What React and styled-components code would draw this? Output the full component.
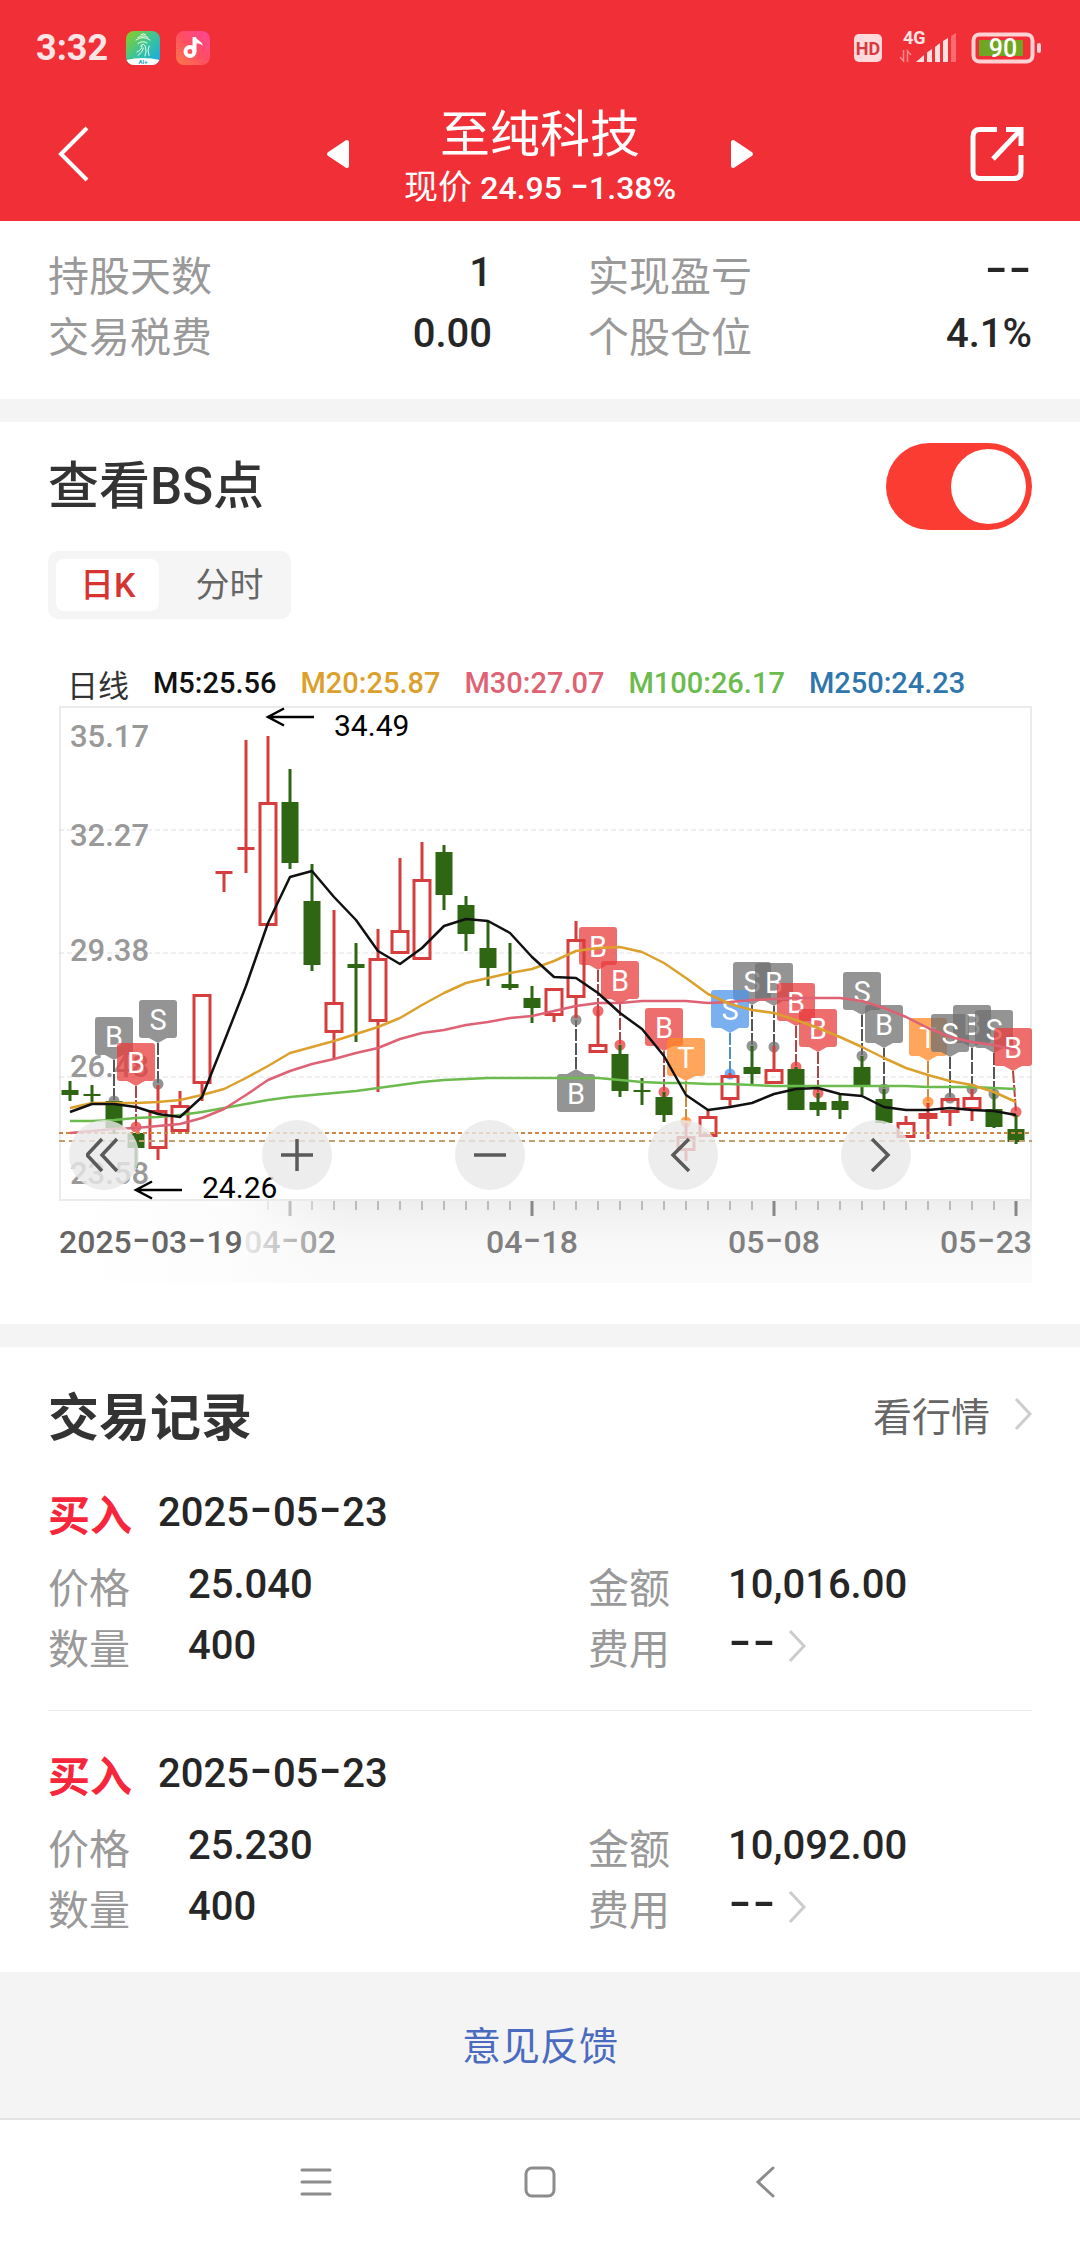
import React, { useState } from 'react';
import styled, { createGlobalStyle } from 'styled-components';

const RED = '#d63d3d';
const GREEN = '#2f6614';
const STEP = 22;
const FIRST = 11;

// up, high, body top, body bottom, low
const CANDLES = [
  [0, 1081, 1090, 1095, 1101],
  [0, 1085, 1094, 1096, 1103],
  [0, 1101, 1101, 1128, 1134],
  [0, 1133, 1133, 1148, 1168],
  [1, 1085, 1110, 1149, 1160],
  [1, 1091, 1105, 1132, 1132],
  [1, 994, 994, 1084, 1101],
  [1, 872, 871, 874, 892],
  [1, 740, 847, 850, 873],
  [1, 736, 802, 926, 926],
  [0, 769, 802, 863, 869],
  [0, 864, 901, 965, 971],
  [1, 910, 1002, 1033, 1059],
  [0, 943, 964, 968, 1042],
  [1, 929, 958, 1022, 1092],
  [1, 858, 930, 954, 954],
  [1, 842, 879, 960, 960],
  [0, 845, 852, 895, 910],
  [0, 896, 905, 934, 951],
  [0, 922, 948, 968, 986],
  [0, 943, 984, 988, 990],
  [0, 986, 998, 1008, 1023],
  [1, 988, 988, 1016, 1022],
  [1, 921, 939, 998, 1018],
  [1, 1010, 1044, 1053, 1053],
  [0, 1045, 1054, 1091, 1097],
  [0, 1078, 1090, 1092, 1105],
  [0, 1092, 1097, 1115, 1122],
  [1, 1123, 1136, 1151, 1161],
  [1, 1110, 1116, 1137, 1137],
  [1, 1073, 1075, 1100, 1106],
  [0, 1046, 1067, 1074, 1084],
  [1, 1046, 1069, 1084, 1084],
  [0, 1067, 1069, 1110, 1110],
  [0, 1093, 1102, 1110, 1116],
  [0, 1095, 1101, 1110, 1119],
  [0, 1056, 1067, 1085, 1095],
  [0, 1089, 1099, 1123, 1124],
  [1, 1116, 1122, 1138, 1138],
  [1, 1103, 1113, 1119, 1139],
  [1, 1098, 1098, 1113, 1126],
  [1, 1089, 1097, 1110, 1121],
  [0, 1093, 1109, 1127, 1128],
  [0, 1115, 1129, 1142, 1144],
];

const AVERAGES = [
  {
    color: '#6cbb4e',
    values: [1121, 1121, 1120, 1118, 1117, 1115, 1112, 1108, 1104, 1100, 1097, 1095, 1093, 1091, 1088, 1085, 1082, 1080, 1079, 1078, 1078, 1078, 1078, 1078, 1078, 1080, 1082, 1083, 1083, 1084, 1084, 1085, 1086, 1086, 1086, 1086, 1086, 1086, 1086, 1087, 1087, 1087, 1088, 1089],
  },
  {
    color: '#df6274',
    values: [1133, 1131, 1129, 1128, 1126, 1124, 1118, 1109, 1095, 1080, 1071, 1064, 1059, 1053, 1048, 1039, 1033, 1030, 1025, 1022, 1018, 1016, 1011, 1006, 1003, 1003, 1001, 1001, 1001, 1003, 1002, 1000, 999, 998, 998, 998, 1001, 1008, 1017, 1028, 1037, 1042, 1045, 1050],
  },
  {
    color: '#dca02c',
    values: [1108, 1103, 1103, 1103, 1102, 1100, 1095, 1089, 1078, 1066, 1053, 1047, 1041, 1034, 1027, 1018, 1005, 993, 983, 978, 973, 969, 961, 951, 948, 947, 952, 963, 978, 994, 1004, 1010, 1013, 1020, 1028, 1037, 1047, 1058, 1068, 1075, 1081, 1085, 1092, 1102],
  },
  {
    color: '#111',
    values: [1112, 1104, 1104, 1107, 1114, 1117, 1097, 1042, 986, 923, 877, 871, 897, 920, 951, 964, 948, 926, 919, 921, 933, 957, 977, 978, 993, 1013, 1029, 1056, 1095, 1110, 1107, 1103, 1094, 1089, 1088, 1094, 1096, 1107, 1110, 1110, 1108, 1110, 1111, 1115],
  },
];

const MARKER_COLORS = {
  gray: ['#707070', '#555'],
  red: ['#e83c3c', '#b04545'],
  orange: ['#ff8826', '#d18a3c'],
  blue: ['#4e96eb', '#4e8fc4'],
};

const MARKERS = [
  { i: 2, text: 'B', tone: 'gray', dot: 1101 },
  { i: 3, text: 'B', tone: 'red', dot: 1127 },
  { i: 4, text: 'S', tone: 'gray', dot: 1084 },
  { i: 23, text: 'B', tone: 'gray', dot: 1020, below: true },
  { i: 24, text: 'B', tone: 'red', dot: 1011 },
  { i: 25, text: 'B', tone: 'red', dot: 1045 },
  { i: 27, text: 'B', tone: 'red', dot: 1092 },
  { i: 28, text: 'T', tone: 'orange', dot: 1122 },
  { i: 31, text: 'S', tone: 'gray', dot: 1046 },
  { i: 30, text: 'S', tone: 'blue', dot: 1074 },
  { i: 32, text: 'B', tone: 'gray', dot: 1047 },
  { i: 33, text: 'B', tone: 'red', dot: 1067 },
  { i: 34, text: 'B', tone: 'red', dot: 1093 },
  { i: 36, text: 'S', tone: 'gray', dot: 1056 },
  { i: 37, text: 'B', tone: 'gray', dot: 1089 },
  { i: 39, text: 'T', tone: 'orange', dot: 1102 },
  { i: 41, text: 'B', tone: 'gray', dot: 1089 },
  { i: 40, text: 'S', tone: 'gray', dot: 1098 },
  { i: 42, text: 'S', tone: 'gray', dot: 1094 },
  { i: 43, text: 'B', tone: 'red', dot: 1112 },
];

const LEGEND = [
  { text: 'M5:25.56', color: '#111' },
  { text: 'M20:25.87', color: '#dca02c' },
  { text: 'M30:27.07', color: '#df6274' },
  { text: 'M100:26.17', color: '#6cbb4e' },
  { text: 'M250:24.23', color: '#2f76ad' },
];

const PRICES = [
  ['35.17', 747],
  ['32.27', 846],
  ['29.38', 961],
  ['26.48', 1077],
  ['23.58', 1184],
];

const STATS = [
  ['持股天数', '1'],
  ['实现盈亏', '--'],
  ['交易税费', '0.00'],
  ['个股仓位', '4.1%'],
];

const RECORDS = [
  { id: 1, side: '买入', date: '2025-05-23', price: '25.040', amount: '10,016.00', count: '400', fee: '--' },
  { id: 2, side: '买入', date: '2025-05-23', price: '25.230', amount: '10,092.00', count: '400', fee: '--' },
];

const xAt = i => FIRST + i * STEP;

function Dashed({ text, as: Part }) {
  return text.split(/(-)/).map((part, i) => (part === '-' ? <Part key={i}>-</Part> : part));
}

function Figures({ children }) {
  return <Dashed text={children} as={Dash} />;
}

function Candle({ x, data }) {
  const [up, high, top, bottom, low] = data;
  const color = up ? RED : GREEN;
  const flat = bottom - top < 5;
  return (
    <g>
      {high < top && <rect x={x - 1.5} y={high} width="3" height={top - high} fill={color} />}
      {low > bottom && <rect x={x - 1.5} y={bottom} width="3" height={low - bottom} fill={color} />}
      {up && !flat ? (
        <rect x={x - 8} y={top + 1.5} width="16" height={bottom - top - 3} fill="none" stroke={color} strokeWidth="3" />
      ) : (
        <rect x={x - 8.5} y={top} width="17" height={bottom - top} fill={color} />
      )}
    </g>
  );
}

function Marker({ i, text, tone, dot, below }) {
  const x = xAt(i);
  const boxX = Math.min(x, 954);
  const [fill, line] = MARKER_COLORS[tone];
  const top = below ? dot + 54 : dot - 84;
  const tip = below ? `M${boxX - 9} ${top}l9 -5l9 5z` : `M${boxX - 9} ${top + 38}l9 5l9 -5z`;
  return (
    <g>
      <line x1={boxX} y1={below ? top - 5 : top + 43} x2={x} y2={dot} stroke={line} strokeWidth="2" strokeDasharray="12 2" />
      <circle cx={x} cy={dot} r="5.5" fill={fill} fillOpacity="0.75" />
      <g fill={fill} fillOpacity="0.75">
        <rect x={boxX - 19} y={top} width="38" height="38" rx="3" />
        <path d={tip} />
      </g>
      <MarkerText x={boxX} y={top + 30}>{text}</MarkerText>
    </g>
  );
}

function KLineChart() {
  return (
    <ChartSvg viewBox="0 704 973 580" role="img" aria-label="日K">
      <defs>
        <linearGradient id="axis" x1="0" y1="0" x2="0" y2="1">
          <stop offset="0" stopColor="#eeeeee" />
          <stop offset="0.5" stopColor="#f8f8f8" />
          <stop offset="1" stopColor="#fafafa" />
        </linearGradient>
        <linearGradient id="fade" x1="0" y1="0" x2="1" y2="0">
          <stop offset="0" stopColor="#fff" />
          <stop offset="0.6" stopColor="#fdfdfd" stopOpacity="0.95" />
          <stop offset="1" stopColor="#fafafa" stopOpacity="0" />
        </linearGradient>
      </defs>

      <rect x="1" y="707" width="971" height="493" fill="none" stroke="#ebebeb" strokeWidth="2" />
      {[830, 953, 1077].map(y => (
        <line key={y} x1="0" y1={y} x2="973" y2={y} stroke="#e0e0e0" strokeDasharray="5 3" />
      ))}
      {PRICES.map(([text, y]) => (
        <PriceText key={text} x="11" y={y}>{text}</PriceText>
      ))}

      {MARKERS.map(marker => <Marker key={marker.i} {...marker} />)}
      {CANDLES.map((data, i) => <Candle key={i} x={xAt(i)} data={data} />)}
      <line x1="0" y1="1133" x2="973" y2="1133" stroke="#cf8446" strokeWidth="2" strokeDasharray="4 3" />
      <line x1="0" y1="1141" x2="973" y2="1141" stroke="#c0a070" strokeWidth="2" strokeDasharray="6 4" />
      {AVERAGES.map(({ color, values }) => (
        <polyline
          key={color}
          points={values.map((y, i) => `${xAt(i)},${y}`).join(' ')}
          fill="none"
          stroke={color}
          strokeWidth="2.5"
          strokeLinejoin="round"
        />
      ))}

      <path d="M255 717H209M225 708.500L209 717L225 725.500" fill="none" stroke="#000" strokeWidth="2.500" />
      <NoteText x="275" y="736">34.49</NoteText>
      <path d="M123 1190H77M93 1181.500L77 1190L93 1198.500" fill="none" stroke="#000" strokeWidth="2.500" />
      <NoteText x="143" y="1198">24.26</NoteText>

      <rect x="0" y="1201" width="973" height="82" fill="url(#axis)" />
      {CANDLES.map((_, i) => {
        const major = i % 11 === 10;
        return (
          <rect
            key={i}
            x={xAt(i) - (major ? 1.5 : 0.5)}
            y="1201"
            width={major ? 3 : 1}
            height={major ? 15 : 9}
            fill="#888"
            fillOpacity={i < 9 ? 0 : 1}
          />
        );
      })}
      <AxisText x="231" y="1253" textAnchor="middle"><Dashed text="04-02" as={SvgDash} /></AxisText>
      <rect x="0" y="1201" width="290" height="82" fill="url(#fade)" />
      <AxisText x="0" y="1253" $strong><Dashed text="2025-03-19" as={SvgDash} /></AxisText>
      <AxisText x="473" y="1253" textAnchor="middle"><Dashed text="04-18" as={SvgDash} /></AxisText>
      <AxisText x="715" y="1253" textAnchor="middle"><Dashed text="05-08" as={SvgDash} /></AxisText>
      <AxisText x="973" y="1253" textAnchor="end"><Dashed text="05-23" as={SvgDash} /></AxisText>
    </ChartSvg>
  );
}

function StatusIcons() {
  return (
    <svg width="188" height="40" viewBox="0 0 188 40" aria-hidden="true">
      <rect x="0" y="6" width="28" height="28" rx="5" fill="#ffd9db" />
      <HdText x="14" y="27" textAnchor="middle">HD</HdText>
      <SignalText x="49" y="16">4G</SignalText>
      <g stroke="#ff8a8e" strokeWidth="1.5" fill="none">
        <path d="M49.500 22V33L46 29" />
        <path d="M53.500 34V23L57 27" />
      </g>
      <g fill="#ffe0e1">
        <path d="M62 34L70 27V34z" />
        <path d="M73 34V24.500L78 21V34z" />
        <path d="M81 34V19L86 15V34z" />
        <path d="M89 34V13L94 10V34z" />
      </g>
      <path d="M97 34V8L102 5V34z" fill="#ff6a70" />
      <rect x="119.500" y="6.500" width="59" height="27" rx="6" fill="none" stroke="#ffd2d4" strokeWidth="4" />
      <rect x="125" y="12" width="44" height="16" rx="1" fill="#6fa722" />
      <rect x="183" y="15" width="4" height="10" rx="2" fill="#ffd2d4" />
      <BatteryText x="149" y="29" textAnchor="middle">90</BatteryText>
    </svg>
  );
}

function AppIcons() {
  return (
    <svg width="84" height="34" viewBox="0 0 84 34" aria-hidden="true">
      <defs>
        <linearGradient id="home" x1="0" y1="0" x2="1" y2="1">
          <stop offset="0" stopColor="#8fce1f" />
          <stop offset="0.5" stopColor="#3cc39a" />
          <stop offset="1" stopColor="#0fa9f2" />
        </linearGradient>
        <linearGradient id="music" x1="1" y1="0" x2="0" y2="1">
          <stop offset="0" stopColor="#ff4597" />
          <stop offset="0.5" stopColor="#ff4e62" />
          <stop offset="1" stopColor="#ff7a48" />
        </linearGradient>
        <clipPath id="round"><rect width="34" height="34" rx="8" /></clipPath>
      </defs>
      <g clipPath="url(#round)">
        <rect width="34" height="34" fill="url(#home)" />
        <g fill="none" stroke="#e8fff2" strokeWidth="1" strokeLinecap="round">
          <path d="M15 3.500Q17 2 19.500 3.500" />
          <path d="M12 6.500Q17.500 3 22 6.500" />
          <path d="M10 9Q17 4 24 9" />
          <path d="M12 12.500Q17 9 21 12" />
          <path d="M14.500 15Q18 11 19.500 16Q21 21 19 25" />
          <path d="M11 21Q16 19 16 15" />
          <path d="M12 24.500Q17 21 17.500 17" />
          <path d="M23 15Q21 19 23 24.500" />
        </g>
        <path d="M0 29Q17 25 34 29V34H0z" fill="#fff" />
        <TinyText x="17" y="33" textAnchor="middle">AI+</TinyText>
      </g>
      <rect x="50" width="34" height="34" rx="8" fill="url(#music)" />
      <circle cx="64" cy="20.500" r="4.500" fill="none" stroke="#fff" strokeWidth="4" />
      <path d="M66.500 6H70C70.500 9.500 76 9.500 77 15C74.500 12.500 72 12.500 70.500 12.500V21H66.500z" fill="#fff" />
    </svg>
  );
}

function Chevron() {
  return (
    <svg width="18" height="34" viewBox="0 0 18 34" fill="none" stroke="#ccc" strokeWidth="3" aria-hidden="true">
      <path d="M2 2L16 17L2 32" />
    </svg>
  );
}

function ControlIcon({ d }) {
  return (
    <svg width="36" height="36" viewBox="0 0 36 36" fill="none" stroke="#5a5a5a" strokeWidth="3.500" aria-hidden="true">
      <path d={d} />
    </svg>
  );
}

const CONTROLS = [
  ['最早', 'M16 2L1 18L16 34M31 2L16 18L31 34'],
  ['放大', 'M18 2V34M2 18H34'],
  ['缩小', 'M2 18H34'],
  ['向左', 'M24 2L8 18L24 34'],
  ['向右', 'M14 2L30 18L14 34'],
];

function App() {
  const [showPoints, setShowPoints] = useState(true);
  const [period, setPeriod] = useState('日K');

  return (
    <Page>
      <GlobalStyle />
      <Header>
        <StatusBar>
          <Clock>3:32</Clock>
          <AppIcons />
          <Spacer />
          <StatusIcons />
        </StatusBar>
        <TitleBar>
          <IconButton aria-label="返回">
            <svg width="54" height="56" viewBox="0 0 54 56" fill="none" stroke="#fff" strokeWidth="4">
              <path d="M31 2L5 28L31 54" />
            </svg>
          </IconButton>
          <StockNav>
            <IconButton aria-label="上一只">
              <svg width="24" height="30" viewBox="0 0 24 30" fill="#fff" stroke="#fff" strokeWidth="4" strokeLinejoin="round">
                <path d="M3 15L21 3V27z" />
              </svg>
            </IconButton>
            <Stock>
              <StockName>至纯科技</StockName>
              <Quote>现价 <b><Figures>24.95 -1.38%</Figures></b></Quote>
            </Stock>
            <IconButton aria-label="下一只">
              <svg width="24" height="30" viewBox="0 0 24 30" fill="#fff" stroke="#fff" strokeWidth="4" strokeLinejoin="round">
                <path d="M21 15L3 3V27z" />
              </svg>
            </IconButton>
          </StockNav>
          <IconButton aria-label="分享">
            <svg width="54" height="56" viewBox="0 0 54 56" fill="none" stroke="#fff" strokeWidth="5">
              <path d="M27 3.500H10Q3 3.500 3 10.500V46Q3 52.500 10 52.500H44Q51 52.500 51 46V29" />
              <path d="M36 3.500H51V20" />
              <path d="M50 4.500L23 33" />
            </svg>
          </IconButton>
        </TitleBar>
      </Header>

      <Stats>
        {STATS.map(([label, value]) => (
          <Stat key={label}>
            <Label>{label}</Label>
            <Value><Figures>{value}</Figures></Value>
          </Stat>
        ))}
      </Stats>

      <Section>
        <SwitchRow>
          <SwitchLabel htmlFor="bs-points">查看BS点</SwitchLabel>
          <Switch id="bs-points" type="checkbox" checked={showPoints} onChange={e => setShowPoints(e.target.checked)} />
        </SwitchRow>
        <Tabs>
          {['日K', '分时'].map(name => (
            <Tab key={name} $active={period === name} aria-pressed={period === name} onClick={() => setPeriod(name)}>
              {name}
            </Tab>
          ))}
        </Tabs>
        <Chart>
          <Legend>
            <LegendTitle>日线</LegendTitle>
            {LEGEND.map(({ text, color }) => <LegendItem key={text} $color={color}>{text}</LegendItem>)}
          </Legend>
          <Plot>
            <KLineChart />
            <Controls>
              {CONTROLS.map(([label, d]) => (
                <ControlButton key={label} aria-label={label}><ControlIcon d={d} /></ControlButton>
              ))}
            </Controls>
          </Plot>
        </Chart>
      </Section>

      <Records>
        <RecordsHead>
          <Heading>交易记录</Heading>
          <QuoteLink href="#quote">看行情<Chevron /></QuoteLink>
        </RecordsHead>
        {RECORDS.map(record => (
          <Record key={record.id}>
            <RecordTitle>
              <Side>{record.side}</Side>
              <Value><Figures>{record.date}</Figures></Value>
            </RecordTitle>
            <Details>
              <Detail><Label>价格</Label><Value>{record.price}</Value></Detail>
              <Detail><Label>金额</Label><Value>{record.amount}</Value></Detail>
              <Detail><Label>数量</Label><Value>{record.count}</Value></Detail>
              <Detail><Label>费用</Label><Value><Figures>{record.fee}</Figures></Value><Chevron /></Detail>
            </Details>
          </Record>
        ))}
      </Records>

      <Feedback><a href="#feedback">意见反馈</a></Feedback>

      <SystemNav>
        <IconButton aria-label="菜单">
          <svg width="32" height="32" viewBox="0 0 32 32" stroke="#8c8c8c" strokeWidth="3" strokeLinecap="round">
            <path d="M2 4H30M2 16H30M2 28H30" />
          </svg>
        </IconButton>
        <IconButton aria-label="主页">
          <svg width="32" height="32" viewBox="0 0 32 32" fill="none" stroke="#8c8c8c" strokeWidth="3">
            <rect x="2" y="2" width="28" height="28" rx="6" />
          </svg>
        </IconButton>
        <IconButton aria-label="后退">
          <svg width="32" height="32" viewBox="0 0 32 32" fill="none" stroke="#8c8c8c" strokeWidth="3" strokeLinecap="round">
            <path d="M25 2L10 16L25 30" />
          </svg>
        </IconButton>
      </SystemNav>
    </Page>
  );
}

const GlobalStyle = createGlobalStyle`
  * {
    box-sizing: border-box;
  }
  body {
    margin: 0;
    background: #fff;
    font-family: Roboto, 'Noto Sans CJK SC', sans-serif;
    color: #262626;
  }
  button {
    font-family: inherit;
    border: none;
    background: none;
    padding: 0;
    cursor: pointer;
  }
  svg {
    display: block;
    flex-shrink: 0;
  }
  a {
    text-decoration: none;
  }
`;
const Page = styled.div`
  min-height: 100vh;
  display: flex;
  flex-direction: column;
`;
const Header = styled.header`
  background: #f12f37;
  color: #fff;
`;
const StatusBar = styled.div`
  display: flex;
  align-items: center;
  height: 95px;
  padding: 0 38px 0 36px;
`;
const Clock = styled.span`
  font-size: 36px;
  font-weight: 700;
  color: #ffe4e5;
  margin-right: 18px;
`;
const Spacer = styled.div`
  flex: 1;
`;
const TitleBar = styled.div`
  display: flex;
  align-items: center;
  justify-content: space-between;
  height: 126px;
  padding: 0 56px 8px;
`;
const StockNav = styled.div`
  display: flex;
  align-items: center;
  justify-content: space-between;
  width: 428px;
`;
const Stock = styled.div`
  padding-top: 10px;
  text-align: center;
`;
const StockName = styled.h1`
  margin: 0;
  font-size: 50px;
  font-weight: 400;
  line-height: 56px;
`;
const Quote = styled.p`
  margin: 0;
  font-size: 34px;
  line-height: 48px;

  b {
    font-size: 32px;
    font-weight: 500;
  }
`;
const IconButton = styled.button`
  display: flex;
`;
const Dash = styled.span`
  font-family: Inter, sans-serif;
  font-size: 1.3em;
  font-weight: 400;
  line-height: 0;
`;
const SvgDash = styled.tspan`
  font-family: Inter, sans-serif;
  font-size: 1.3em;
  font-weight: 400;
`;
const Stats = styled.section`
  display: grid;
  grid-template-columns: 1fr 1fr;
  column-gap: 96px;
  padding: 21px 48px 35px;
  border-bottom: 23px solid #f4f4f4;
`;
const Stat = styled.div`
  display: flex;
  align-items: center;
  justify-content: space-between;
  height: 61px;
`;
const Label = styled.span`
  font-size: 41px;
  color: #999;
`;
const Value = styled.span`
  font-size: 40px;
  font-weight: 500;
`;
const Section = styled.section`
  padding: 21px 48px 40px;
  border-bottom: 23px solid #f4f4f4;
`;
const SwitchRow = styled.div`
  display: flex;
  align-items: center;
  justify-content: space-between;
`;
const SwitchLabel = styled.label`
  font-size: 51px;
  font-weight: 500;
  line-height: 60px;
  color: #333;
`;
const Switch = styled.input`
  appearance: none;
  margin: 0;
  width: 146px;
  height: 87px;
  padding: 6px;
  border-radius: 44px;
  background: ${props => props.checked ? "#fb3c32" : "#ccc"};
  display: flex;
  justify-content: ${props => props.checked ? "flex-end" : "flex-start"};
  cursor: pointer;

  &::before {
    content: "";
    width: 75px;
    height: 75px;
    border-radius: 50%;
    background: #fff;
  }
`;
const Tabs = styled.div`
  display: inline-flex;
  gap: 12px;
  margin-top: 21px;
  padding: 8px;
  border-radius: 10px;
  background: #f5f5f5;
`;
const Tab = styled.button`
  height: 52px;
  padding: 0 ${props => props.$active ? "24px" : "20px"} 0 24px;
  border-radius: 8px;
  font-size: 34px;
  line-height: 52px;
  font-weight: ${props => props.$active ? 500 : 400};
  color: ${props => props.$active ? "#d63333" : "#666"};
  background: ${props => props.$active ? "#fff" : "transparent"};
`;
const Chart = styled.div`
  margin: 43px 0 0 11px;
`;
const Legend = styled.div`
  display: flex;
  align-items: center;
  gap: 24px;
  height: 42px;
  padding-left: 8px;
  white-space: nowrap;
`;
const LegendTitle = styled.span`
  font-size: 31px;
  color: #333;
`;
const LegendItem = styled.span`
  font-size: 29px;
  font-weight: 500;
  color: ${props => props.$color};
`;
const Plot = styled.div`
  position: relative;
`;
const ChartSvg = styled.svg`
  width: 100%;
  height: auto;
`;
const PriceText = styled.text`
  font-size: 31px;
  font-weight: 500;
  fill: #999;
`;
const NoteText = styled.text`
  font-size: 30px;
  fill: #000;
`;
const AxisText = styled.text`
  font-size: 32px;
  font-weight: 500;
  fill: ${props => props.$strong ? "#666" : "#808080"};
`;
const MarkerText = styled.text`
  font-size: 29px;
  text-anchor: middle;
  fill: #fff;
`;
const HdText = styled.text`
  font-size: 18px;
  font-weight: 700;
  fill: #d8393f;
`;
const SignalText = styled.text`
  font-size: 18px;
  font-weight: 700;
  fill: #ffe4e5;
`;
const BatteryText = styled.text`
  font-size: 25px;
  font-weight: 500;
  fill: #fff;
`;
const TinyText = styled.text`
  font-size: 6px;
  font-weight: 700;
  fill: #1a9fb8;
`;
const Controls = styled.div`
  position: absolute;
  left: 10px;
  right: 121px;
  bottom: 94px;
  display: flex;
  justify-content: space-between;
`;
const ControlButton = styled.button`
  display: flex;
  align-items: center;
  justify-content: center;
  width: 70px;
  height: 70px;
  border-radius: 50%;
  background: rgba(232, 232, 232, 0.8);
`;
const Records = styled.section`
  padding: 36px 48px 0;
`;
const RecordsHead = styled.div`
  display: flex;
  align-items: center;
  justify-content: space-between;
  height: 62px;
  margin-bottom: 5px;
`;
const Heading = styled.h2`
  margin: 0;
  font-size: 51px;
  font-weight: 700;
  color: #333;
`;
const QuoteLink = styled.a`
  display: flex;
  align-items: center;
  gap: 24px;
  font-size: 39px;
  color: #666;
`;
const Record = styled.article`
  padding: 34px 0;
  border-bottom: 1px solid #ebebeb;

  &:last-child {
    border-bottom-color: transparent;
  }
`;
const RecordTitle = styled.div`
  display: flex;
  align-items: center;
  gap: 26px;
  height: 56px;
  margin-bottom: 14px;
`;
const Side = styled.span`
  font-size: 42px;
  font-weight: 700;
  color: #f7263a;
`;
const Details = styled.div`
  display: grid;
  grid-template-columns: 1fr 1fr;
  column-gap: 96px;
`;
const Detail = styled.div`
  display: flex;
  align-items: center;
  height: 61px;

  ${Label} {
    width: 140px;
  }
  svg {
    margin-left: 12px;
  }
`;
const Feedback = styled.footer`
  flex: 1;
  display: flex;
  align-items: center;
  justify-content: center;
  min-height: 146px;
  padding-bottom: 4px;
  background: #f4f4f4;
  font-size: 39px;

  a {
    color: #4a6bc0;
  }
`;
const SystemNav = styled.nav`
  display: flex;
  align-items: center;
  justify-content: center;
  gap: 192px;
  height: 130px;
  padding-bottom: 4px;
  border-top: 2px solid #e3e3e3;
`;

export default App;
